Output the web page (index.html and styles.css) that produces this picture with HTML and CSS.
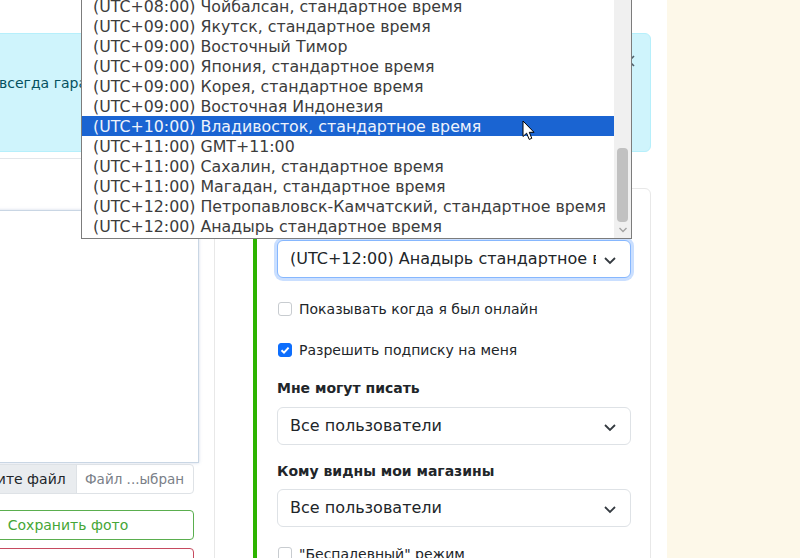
FILE: index.html
```html
<!DOCTYPE html>
<html lang="ru">
<head>
<meta charset="utf-8">
<title>Настройки профиля</title>
<link rel="stylesheet" href="styles.css">
</head>
<body>
<div class="page">
  <div class="main">
    <div class="container">
      <div class="alert">
        <span class="alert-text">всегда гарантируем безопасность сделок на нашей площадке</span>
        <span class="alert-close"><svg width="14" height="14" viewBox="0 0 14 14"><path d="M2 2L12 12M12 2L2 12" stroke="#50606a" stroke-width="1.6" fill="none"/></svg></span>
      </div>
      <div class="row">
        <div class="left-col">
          <div class="left-rule"></div>
          <div class="preview"></div>
          <div class="file-input"><span class="file-btn">Выберите файл</span><span class="file-name">Файл ...ыбран</span></div>
          <div class="btn btn-green">Сохранить фото</div>
          <div class="btn btn-red">Удалить фото</div>
        </div>
        <div class="card">
          <div class="card-inner">
            <div class="label">Часовой пояс</div>
            <div class="select select-focus"><span class="select-text">(UTC+12:00) Анадырь стандартное время</span><svg class="chev" width="14" height="14" viewBox="0 0 14 14"><path d="M2 5L7 10L12 5" stroke="#343a40" stroke-width="1.8" fill="none"/></svg></div>
            <div class="check check-first"><span class="box"></span><span>Показывать когда я был онлайн</span></div>
            <div class="check check-second"><span class="box box-on"><svg width="14" height="14" viewBox="0 0 14 14"><path d="M3.5 7.2L6 9.6L10.6 4.6" stroke="#fff" stroke-width="2" fill="none"/></svg></span><span>Разрешить подписку на меня</span></div>
            <div class="label label-bold label-a">Мне могут писать</div>
            <div class="select select-a"><span class="select-text">Все пользователи</span><svg class="chev" width="14" height="14" viewBox="0 0 14 14"><path d="M2 5L7 10L12 5" stroke="#343a40" stroke-width="1.8" fill="none"/></svg></div>
            <div class="label label-bold label-b">Кому видны мои магазины</div>
            <div class="select select-b"><span class="select-text">Все пользователи</span><svg class="chev" width="14" height="14" viewBox="0 0 14 14"><path d="M2 5L7 10L12 5" stroke="#343a40" stroke-width="1.8" fill="none"/></svg></div>
            <div class="check check-third"><span class="box"></span><span>"Беспалевный" режим</span></div>
          </div>
        </div>
      </div>
    </div>
  </div>
  <div class="aside"></div>

  <div class="dropdown">
    <ul class="options">
      <li>(UTC+08:00) Чойбалсан, стандартное время</li>
      <li>(UTC+09:00) Якутск, стандартное время</li>
      <li>(UTC+09:00) Восточный Тимор</li>
      <li>(UTC+09:00) Япония, стандартное время</li>
      <li>(UTC+09:00) Корея, стандартное время</li>
      <li>(UTC+09:00) Восточная Индонезия</li>
      <li class="active">(UTC+10:00) Владивосток, стандартное время</li>
      <li>(UTC+11:00) GMT+11:00</li>
      <li>(UTC+11:00) Сахалин, стандартное время</li>
      <li>(UTC+11:00) Магадан, стандартное время</li>
      <li>(UTC+12:00) Петропавловск-Камчатский, стандартное время</li>
      <li>(UTC+12:00) Анадырь стандартное время</li>
    </ul>
    <div class="scrollbar">
      <div class="thumb"></div>
      <svg class="arrow-down" width="10" height="8" viewBox="0 0 10 8"><path d="M1.5 2L5 5.5L8.5 2" stroke="#a3a3a3" stroke-width="1.4" fill="none"/></svg>
    </div>
  </div>

  <svg class="cursor" width="14" height="21" viewBox="0 0 14 21"><path d="M1 1L1 16.5L4.6 13.2L7.2 19.4L9.8 18.3L7.3 12.3L12 12.3Z" fill="#fff" stroke="#000" stroke-width="1" stroke-linejoin="round"/></svg>
</div>
</body>
</html>
```

FILE: styles.css
```css
html, body {
  margin: 0;
  padding: 0;
}
body {
  width: 800px;
  height: 558px;
  overflow: hidden;
  font-family: "DejaVu Sans", "Noto Sans", sans-serif;
  color: #212529;
  background: #fff;
}
.page {
  position: relative;
  display: flex;
  width: 800px;
  height: 558px;
}
.main {
  width: 667px;
  flex: none;
  background: #fff;
  overflow: hidden;
}
.aside {
  flex: 1;
  background: #fdf8e9;
}
.container {
  margin-left: -58px;
  width: 709px;
  padding-top: 33px;
}
.alert {
  position: relative;
  box-sizing: border-box;
  height: 119px;
  background: #cff4fc;
  border: 1px solid #b6effb;
  border-radius: 6px;
  color: #055160;
  font-size: 14px;
  line-height: 20px;
  padding: 39px 16px 0 56px;
  white-space: nowrap;
  overflow: hidden;
}
.alert-close {
  position: absolute;
  right: 14px;
  top: 20px;
  width: 14px;
  height: 14px;
}
.alert-close svg {
  display: block;
}
.row {
  display: flex;
  gap: 20px;
  align-items: flex-start;
  margin-top: 6px;
}
.left-col {
  width: 252px;
  flex: none;
  display: flex;
  flex-direction: column;
}
.left-rule {
  height: 1px;
  background: #e3e6ea;
  margin-bottom: 51px;
}
.preview {
  box-sizing: border-box;
  height: 253px;
  margin-right: -5px;
  border: 1px solid #c9d6e4;
  box-shadow: 0 0 3px rgba(120, 150, 190, .35);
  background: #fff;
}
.file-input {
  display: flex;
  box-sizing: border-box;
  height: 30px;
  margin-top: 1px;
  border: 1px solid #dee2e6;
  border-radius: 4px;
  font-size: 14px;
  line-height: 28px;
  overflow: hidden;
}
.file-btn {
  width: 134px;
  flex: none;
  box-sizing: border-box;
  padding-left: 7px;
  background: #e9ecef;
  border-right: 1px solid #dee2e6;
  white-space: nowrap;
}
.file-name {
  padding-left: 8px;
  color: #7a8088;
  white-space: nowrap;
  font-size: 13.5px;
}
.btn {
  box-sizing: border-box;
  height: 30px;
  border-radius: 4px;
  font-size: 14px;
  line-height: 28px;
  text-align: center;
}
.btn-green {
  margin-top: 16px;
  border: 1px solid #5aae4e;
  color: #45a636;
}
.btn-red {
  margin-top: 8px;
  border: 1px solid #c64a5e;
  color: #c64a5e;
  line-height: 34px;
}
.card {
  box-sizing: border-box;
  width: 437px;
  flex: none;
  margin-top: 30px;
  height: 420px;
  border: 1px solid #e8e8e8;
  border-radius: 6px;
  padding: 19px 19px 0 38px;
}
.card-inner {
  border-left: 4px solid #2db400;
  padding-left: 20px;
  height: 400px;
}
.label {
  font-size: 14px;
  line-height: 22px;
  margin-bottom: 10px;
}
.label-bold {
  font-weight: bold;
  line-height: 20px;
  margin-bottom: 0;
}
.label-a {
  margin-top: 18px;
}
.label-b {
  margin-top: 16px;
}
.select {
  position: relative;
  box-sizing: border-box;
  height: 38px;
  border: 1px solid #dee2e6;
  border-radius: 6px;
  font-size: 16px;
  line-height: 36px;
  padding: 0 34px 0 12px;
  white-space: nowrap;
  overflow: hidden;
  background: #fff;
}
.select-focus {
  border-color: #86b7fe;
  box-shadow: 0 0 0 3px rgba(13, 110, 253, .22);
  overflow: visible;
}
.select-text {
  display: block;
  overflow: hidden;
}
.chev {
  position: absolute;
  right: 13px;
  top: 12px;
}
.select-a {
  margin-top: 9px;
}
.select-b {
  margin-top: 8px;
}
.check {
  display: flex;
  align-items: center;
  gap: 7px;
  height: 20px;
  font-size: 14px;
  line-height: 20px;
  padding-left: 1px;
}
.check-first {
  margin-top: 21px;
}
.check-second {
  margin-top: 21px;
}
.check-third {
  margin-top: 17px;
}
.box {
  box-sizing: border-box;
  width: 14px;
  height: 14px;
  border: 1px solid #c8ccd0;
  border-radius: 3px;
  flex: none;
  background: #fff;
}
.box-on {
  background: #0d6efd;
  border-color: #0d6efd;
}
.box svg {
  display: block;
  margin: -1px;
}
.dropdown {
  position: absolute;
  left: 81px;
  top: -5px;
  width: 551px;
  height: 244px;
  box-sizing: border-box;
  border: 1px solid #7c7c7c;
  background: #fff;
  display: flex;
}
.options {
  list-style: none;
  margin: 0;
  padding: 0;
  width: 532px;
  flex: none;
}
.options li {
  height: 20px;
  line-height: 21px;
  padding-left: 11px;
  font-size: 15.8px;
  color: #3c3c3c;
  white-space: nowrap;
  overflow: hidden;
}
.options li.active {
  background: #1a64d2;
  color: #eef3fc;
}
.scrollbar {
  position: relative;
  flex: 1;
  background: #f0f0f0;
}
.thumb {
  position: absolute;
  left: 3px;
  right: 3px;
  top: 152px;
  height: 74px;
  background: #c1c1c1;
  border-radius: 4px;
}
.arrow-down {
  position: absolute;
  left: 4px;
  bottom: 4px;
}
.cursor {
  position: absolute;
  left: 522px;
  top: 120px;
}
```
